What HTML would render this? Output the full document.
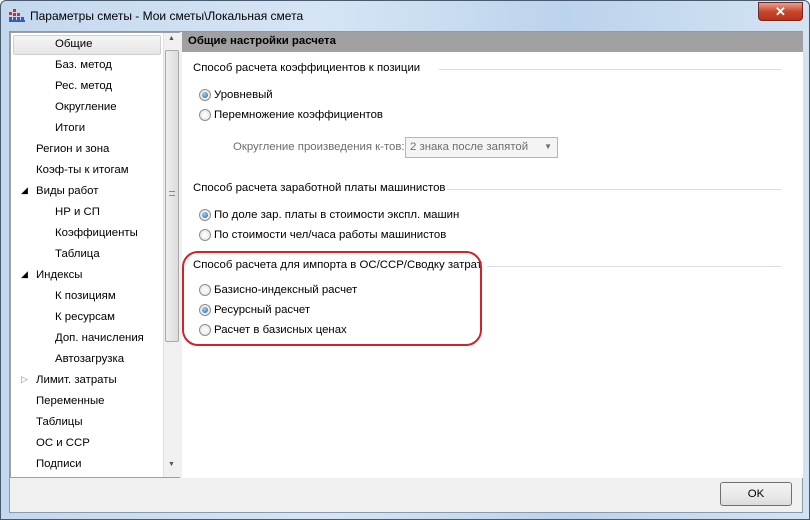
<!DOCTYPE html>
<html><head><meta charset="utf-8"><style>
*{margin:0;padding:0;box-sizing:border-box}
body{width:810px;height:520px;overflow:hidden;font-family:"Liberation Sans",sans-serif;font-size:11.4px;color:#000;background:#fff}
.win{position:absolute;left:0;top:0;width:810px;height:520px;border:1px solid #4a5a6e;border-radius:6px 6px 0 0;background:linear-gradient(90deg,#c4d8ee,#d6e5f5 40%,#bcd3ec 70%,#d3e3f3);}
.title{position:absolute;left:29px;top:8px;font-size:12px;color:#000}
.close{position:absolute;left:757px;top:1px;width:45px;height:19px;border:1px solid #6b2a22;border-radius:0 0 4px 4px;background:linear-gradient(#e8a08e,#c9472d 50%,#b83218);color:#fff;font-weight:bold;text-align:center;font-size:13px;line-height:17px}
.client{position:absolute;left:8px;top:30px;width:794px;height:482px;background:#f0f0f0;border:1px solid #8a9bb0}
.tree{position:absolute;left:0;top:0;width:170px;height:446px;background:#fff;border:1px solid #a0a0a0}
.sb{position:absolute;left:152px;top:0;width:17px;height:444px;background:#f0f0f0;border-left:1px solid #e0e0e0}
.thumb{position:absolute;left:1px;top:17px;width:14px;height:292px;background:linear-gradient(90deg,#eee,#dcdcdc);border:1px solid #a8a8a8;border-radius:2px}
.it{position:absolute;white-space:nowrap}
.sel{position:absolute;left:2px;top:2px;width:148px;height:20px;background:linear-gradient(#f5f5f5,#e6e6e6);border:1px solid #d0d0d0;border-radius:2px}
.right{position:absolute;left:172px;top:0;width:621px;height:446px;background:#fff}
.hdr{position:absolute;left:0;top:0;width:621px;height:20px;background:#a0a0a0;font-weight:bold;padding:3px 0 0 6px}
.t{position:absolute;white-space:nowrap}
.ln{position:absolute;height:1px;background:#d8dde2}
.r{position:absolute;width:12px;height:12px;border-radius:50%;border:1px solid #8e8f8f;background:radial-gradient(#fff,#e0e0e0)}
.r.on::after{content:"";position:absolute;left:2px;top:2px;width:6px;height:6px;border-radius:50%;background:radial-gradient(circle at 40% 35%,#9fd4f5,#1c5f9e)}
.red{position:absolute;left:172px;top:219px;width:300px;height:95px;border:2px solid #d2232a;border-radius:16px}
.ok{position:absolute;left:710px;top:450px;width:72px;height:24px;border:1px solid #707070;border-radius:3px;background:linear-gradient(#f2f2f2,#ebebeb 50%,#dcdcdc);text-align:center;line-height:22px}
</style></head><body>
<div class="win">
<svg style="position:absolute;left:8px;top:8px" width="16" height="14"><g fill="#c8302a"><rect x="0" y="3" width="3" height="3"/><rect x="4" y="0" width="3" height="3"/><rect x="4" y="4" width="3" height="3"/><rect x="8" y="4" width="3" height="3"/></g><g fill="#3a5bb0"><rect x="0" y="8" width="3" height="3"/><rect x="4" y="8" width="3" height="3"/><rect x="8" y="8" width="3" height="3"/><rect x="12" y="8" width="3" height="3"/><rect x="0" y="11" width="16" height="2"/></g></svg>
<div class="title">Параметры сметы - Мои сметы\Локальная смета</div>
<div class="close">✕</div>
<div class="client">
 <div class="tree">
  <div class="sel"></div>
  <div class="it" style="left:44px;top:5px">Общие</div>
  <div class="it" style="left:44px;top:26px">Баз. метод</div>
  <div class="it" style="left:44px;top:47px">Рес. метод</div>
  <div class="it" style="left:44px;top:68px">Округление</div>
  <div class="it" style="left:44px;top:89px">Итоги</div>
  <div class="it" style="left:25px;top:110px">Регион и зона</div>
  <div class="it" style="left:25px;top:131px">Коэф-ты к итогам</div>
  <div class="it" style="left:10px;top:152px;font-size:9px">◢</div><div class="it" style="left:25px;top:152px">Виды работ</div>
  <div class="it" style="left:44px;top:173px">НР и СП</div>
  <div class="it" style="left:44px;top:194px">Коэффициенты</div>
  <div class="it" style="left:44px;top:215px">Таблица</div>
  <div class="it" style="left:10px;top:236px;font-size:9px">◢</div><div class="it" style="left:25px;top:236px">Индексы</div>
  <div class="it" style="left:44px;top:257px">К позициям</div>
  <div class="it" style="left:44px;top:278px">К ресурсам</div>
  <div class="it" style="left:44px;top:299px">Доп. начисления</div>
  <div class="it" style="left:44px;top:320px">Автозагрузка</div>
  <div class="it" style="left:10px;top:341px;font-size:9px;color:#888">▷</div><div class="it" style="left:25px;top:341px">Лимит. затраты</div>
  <div class="it" style="left:25px;top:362px">Переменные</div>
  <div class="it" style="left:25px;top:383px">Таблицы</div>
  <div class="it" style="left:25px;top:404px">ОС и ССР</div>
  <div class="it" style="left:25px;top:425px">Подписи</div>
  <div class="sb"><div class="it" style="left:4px;top:2px;font-size:7px;color:#555">▲</div><div class="thumb"><div style="position:absolute;left:3px;top:140px;width:6px;height:5px;border-top:1px solid #888;border-bottom:1px solid #888"></div></div><div class="it" style="left:4px;top:428px;font-size:7px;color:#555">▼</div></div>
 </div>
 <div class="right">
  <div class="hdr">Общие настройки расчета</div>
  <div class="t" style="left:11px;top:30px">Способ расчета коэффициентов к позиции</div><div class="ln" style="left:257px;top:37px;width:342px"></div>
  <div class="r on" style="left:17px;top:57px"></div><div class="t" style="left:32px;top:57px">Уровневый</div>
  <div class="r" style="left:17px;top:77px"></div><div class="t" style="left:32px;top:77px">Перемножение коэффициентов</div>
  <div class="t" style="left:51px;top:109px;color:#6d6d6d">Округление произведения к-тов:</div>
  <div style="position:absolute;left:223px;top:105px;width:153px;height:21px;border:1px solid #b5b5b5;background:#f4f4f4;color:#6d6d6d;padding:3px 0 0 4px">2 знака после запятой<span style="position:absolute;right:5px;top:4px;font-size:8px">▼</span></div>
  <div class="t" style="left:11px;top:150px">Способ расчета заработной платы машинистов</div><div class="ln" style="left:265px;top:157px;width:334px"></div>
  <div class="r on" style="left:17px;top:177px"></div><div class="t" style="left:32px;top:177px">По доле зар. платы в стоимости экспл. машин</div>
  <div class="r" style="left:17px;top:197px"></div><div class="t" style="left:32px;top:197px">По стоимости чел/часа работы машинистов</div>
  <div class="t" style="left:11px;top:227px">Способ расчета для импорта в ОС/ССР/Сводку затрат</div><div class="ln" style="left:305px;top:234px;width:294px"></div>
  <div class="r" style="left:17px;top:252px"></div><div class="t" style="left:32px;top:252px">Базисно-индексный расчет</div>
  <div class="r on" style="left:17px;top:272px"></div><div class="t" style="left:32px;top:272px">Ресурсный расчет</div>
  <div class="r" style="left:17px;top:292px"></div><div class="t" style="left:32px;top:292px">Расчет в базисных ценах</div>
 </div>
 <div class="red"></div>
 <div class="ok">OK</div>
</div>
</div>
</body></html>
